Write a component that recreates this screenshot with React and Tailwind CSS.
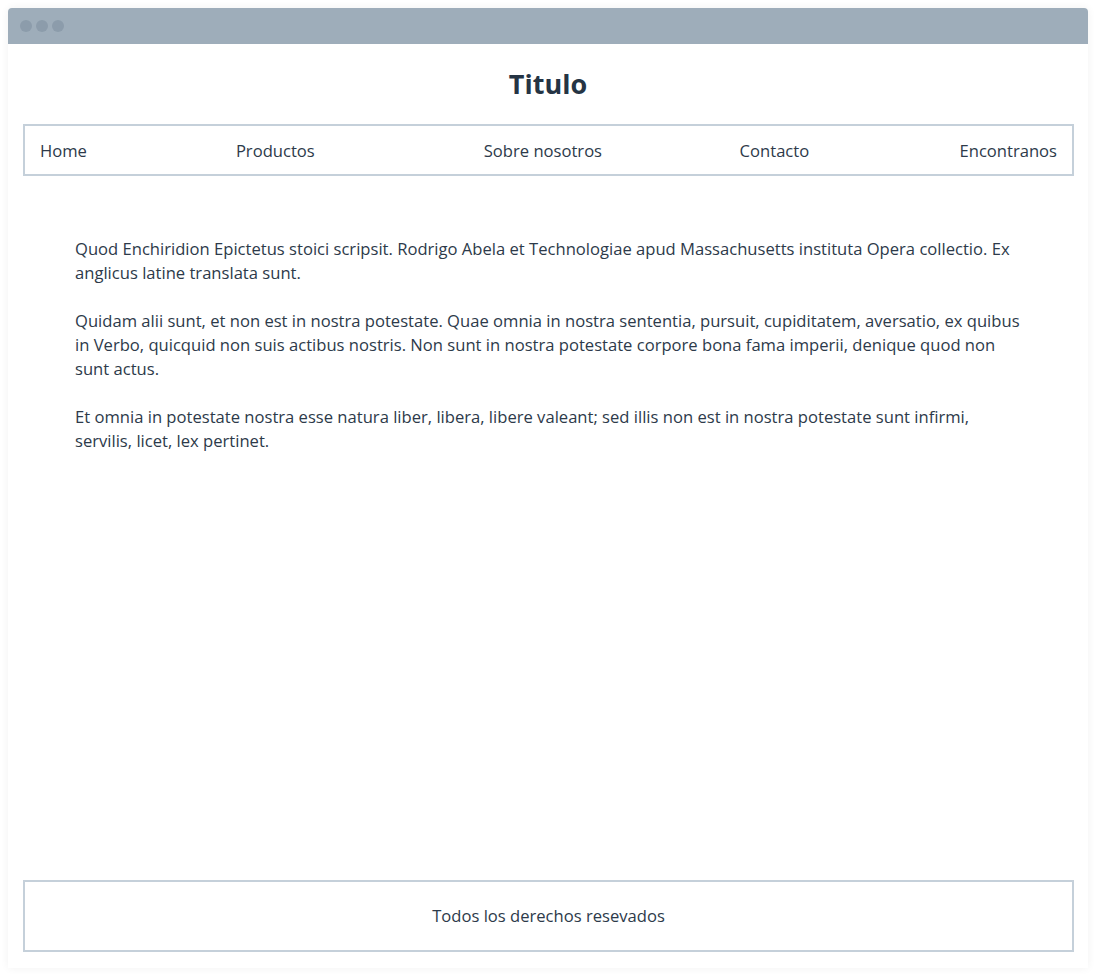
const links = [
  { label: "Home", w: "w-[196px]" },
  { label: "Productos", w: "w-[248px]" },
  { label: "Sobre nosotros", w: "w-[256px]" },
  { label: "Contacto", w: "w-[220px]" },
  { label: "Encontranos", w: "flex-1 text-right" },
];

const paragraphs = [
  "Quod Enchiridion Epictetus stoici scripsit. Rodrigo Abela et Technologiae apud Massachusetts instituta Opera collectio. Ex anglicus latine translata sunt.",
  "Quidam alii sunt, et non est in nostra potestate. Quae omnia in nostra sententia, pursuit, cupiditatem, aversatio, ex quibus in Verbo, quicquid non suis actibus nostris. Non sunt in nostra potestate corpore bona fama imperii, denique quod non sunt actus.",
  "Et omnia in potestate nostra esse natura liber, libera, libere valeant; sed illis non est in nostra potestate sunt infirmi, servilis, licet, lex pertinet.",
];

export default function App() {
  return (
    <div className="min-h-screen bg-white p-2 font-['Open_Sans',sans-serif] text-[#2d3a4a]">
      <div className="flex h-[960px] flex-col rounded-t-[4px] bg-white shadow-[0_0_8px_rgba(0,0,0,0.06)]">
        {/* window bar */}
        <div className="flex h-9 items-center gap-1 rounded-t-[4px] bg-[#9eadba] px-3">
          <span className="h-3 w-3 rounded-full bg-[#8c9cab]" />
          <span className="h-3 w-3 rounded-full bg-[#8c9cab]" />
          <span className="h-3 w-3 rounded-full bg-[#8c9cab]" />
        </div>

        <h1 className="mt-5 text-center text-[27px] font-bold leading-10 text-[#253444]">
          Titulo
        </h1>

        <nav className="ml-[15px] mr-[14px] mt-5 flex border-2 border-[#c5d0da] px-[15px] pb-[11px] pt-[13px] text-[16.6px] leading-6">
          {links.map((l) => (
            <a key={l.label} href="#" className={`${l.w} text-[#2d3a4a]`}>
              {l.label}
            </a>
          ))}
        </nav>

        <main className="flex-1 px-[67px] pt-[61px] text-[16.6px] leading-6">
          {paragraphs.map((p, i) => (
            <p key={i} className="mb-6 max-w-[945px]">
              {p}
            </p>
          ))}
        </main>

        <footer className="mb-4 ml-[15px] mr-[14px] border-2 border-[#c5d0da] py-[22px] text-center text-[16.6px] leading-6">
          Todos los derechos resevados
        </footer>
      </div>
    </div>
  );
}
